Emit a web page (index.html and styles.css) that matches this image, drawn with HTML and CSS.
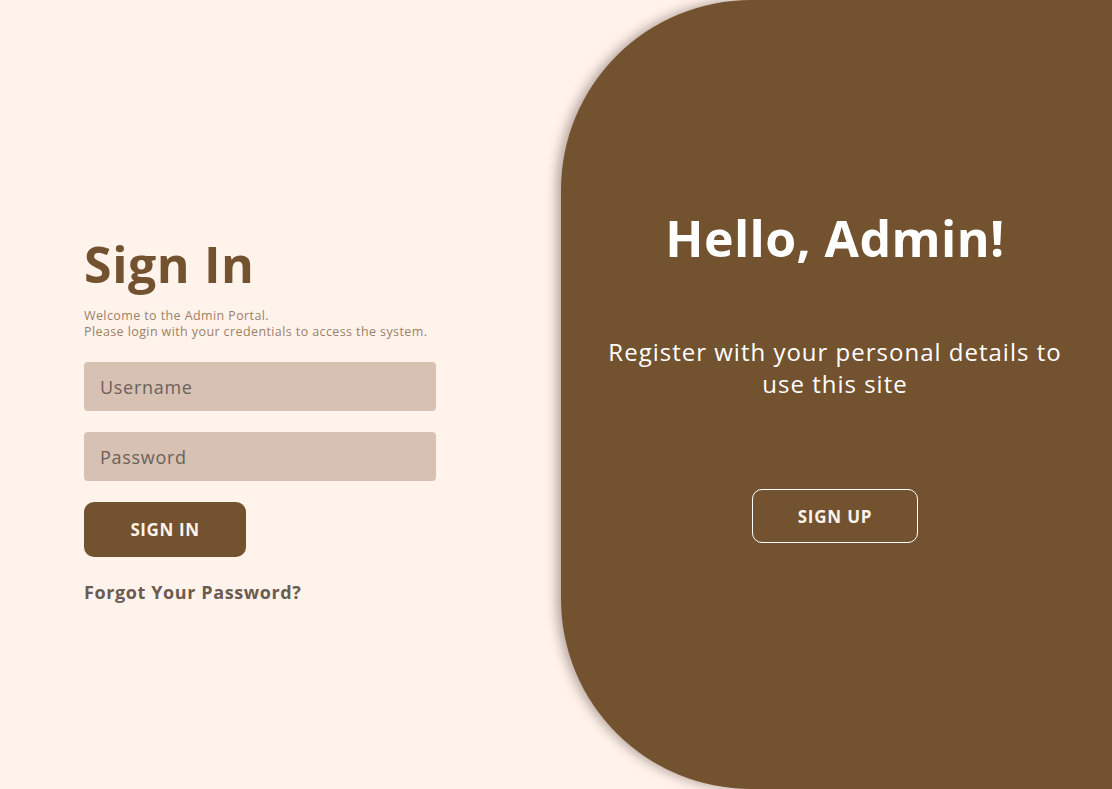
FILE: index.html
```html
<!DOCTYPE html>
<html lang="en">
<head>
<meta charset="utf-8">
<title>Admin Portal</title>
<link rel="stylesheet" href="styles.css">
</head>
<body>
<div class="page">
  <section class="signin">
    <h1 class="title">Sign In</h1>
    <p class="intro">Welcome to the Admin Portal.<br>Please login with your credentials to access the system.</p>
    <form class="form">
      <input class="field" type="text" placeholder="Username">
      <input class="field" type="password" placeholder="Password">
      <button class="btn-primary" type="button">SIGN IN</button>
    </form>
    <a class="forgot" href="#">Forgot Your Password?</a>
  </section>
  <section class="panel">
    <h2 class="hello">Hello, Admin!</h2>
    <p class="register">Register with your personal details to use this site</p>
    <button class="btn-outline" type="button">SIGN UP</button>
  </section>
</div>
</body>
</html>
```
FILE: styles.css
```css
* { box-sizing: border-box; }
html, body { margin: 0; padding: 0; }
body {
  background: #fff3ec;
  font-family: "Open Sans", "Liberation Sans", sans-serif;
  overflow: hidden;
}
.page {
  display: flex;
  width: 1112px;
  height: 789px;
}
.signin {
  width: 561px;
  flex: none;
  padding: 232px 0 0 84px;
  display: flex;
  flex-direction: column;
}
.title {
  margin: 0;
  font-size: 50px;
  line-height: 64px;
  font-weight: 700;
  color: #73522f;
  letter-spacing: 0.6px;
}
.intro {
  margin: 12px 0 0;
  font-size: 12.5px;
  line-height: 16px;
  letter-spacing: 0.4px;
  color: #9d8068;
}
.form {
  display: flex;
  flex-direction: column;
  gap: 21px;
  margin-top: 22px;
  width: 352px;
}
.field {
  height: 49px;
  border: none;
  border-radius: 4px;
  background: #d6c1b2;
  padding: 0 16px;
  font-family: inherit;
  font-size: 18px;
  letter-spacing: 0.7px;
  color: #5f544d;
  outline: none;
}
.field::placeholder { color: #6b615a; }
.btn-primary {
  width: 162px;
  height: 55px;
  border: none;
  border-radius: 10px;
  background: #73522f;
  color: #fff3ec;
  font-family: inherit;
  font-weight: 700;
  font-size: 17px;
  letter-spacing: 0.6px;
}
.forgot {
  margin-top: 23px;
  font-size: 18px;
  font-weight: 700;
  letter-spacing: 0.6px;
  color: #6b5b50;
  text-decoration: none;
}
.panel {
  flex: 1;
  background: #73522f;
  border-radius: 190px 0 0 190px;
  box-shadow: -4px 0 12px rgba(60, 40, 30, 0.4);
  display: flex;
  flex-direction: column;
  align-items: center;
  padding-top: 206px;
  padding-right: 3px;
  color: #ffffff;
  text-align: center;
}
.hello {
  margin: 0;
  font-size: 50px;
  line-height: 64px;
  font-weight: 700;
  letter-spacing: 0.4px;
}
.register {
  margin: 66px 0 0;
  width: 480px;
  font-size: 24px;
  line-height: 32px;
  letter-spacing: 1px;
}
.btn-outline {
  margin-top: 89px;
  width: 166px;
  height: 54px;
  border: 1.5px solid #ffffff;
  border-radius: 10px;
  background: transparent;
  color: #fff3ec;
  font-family: inherit;
  font-weight: 700;
  font-size: 17px;
  letter-spacing: 0.8px;
}
```
